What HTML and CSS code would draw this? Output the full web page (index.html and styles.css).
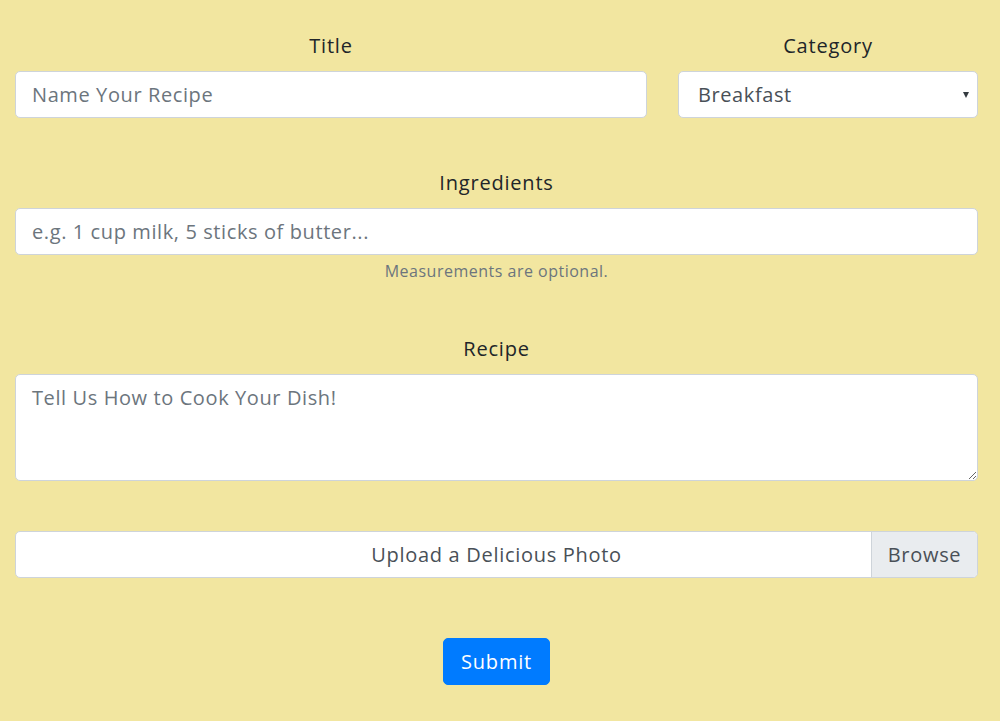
FILE: index.html
```html
<!DOCTYPE html>
<html lang="en">
<head>
<meta charset="utf-8">
<title>New Recipe</title>
<link rel="stylesheet" href="styles.css">
</head>
<body>
<form class="recipe-form">
  <div class="row">
    <div class="group col-main">
      <label class="label" for="title">Title</label>
      <input class="field" id="title" type="text" placeholder="Name Your Recipe">
    </div>
    <div class="group col-side">
      <label class="label" for="category">Category</label>
      <div class="select-wrap">
        <select class="field select" id="category">
          <option>Breakfast</option>
          <option>Lunch</option>
          <option>Dinner</option>
          <option>Dessert</option>
        </select>
        <span class="caret"></span>
      </div>
    </div>
  </div>

  <div class="group">
    <label class="label" for="ingredients">Ingredients</label>
    <input class="field" id="ingredients" type="text" placeholder="e.g. 1 cup milk, 5 sticks of butter...">
    <small class="help">Measurements are optional.</small>
  </div>

  <div class="group">
    <label class="label" for="recipe">Recipe</label>
    <textarea class="field area" id="recipe" placeholder="Tell Us How to Cook Your Dish!"></textarea>
  </div>

  <div class="group">
    <label class="file" for="photo">
      <span class="file-text">Upload a Delicious Photo</span>
      <span class="file-btn">Browse</span>
    </label>
    <input class="file-input" id="photo" type="file">
  </div>

  <div class="actions">
    <button class="submit" type="submit">Submit</button>
  </div>
</form>
</body>
</html>
```

FILE: styles.css
```css
html, body {
  margin: 0;
  padding: 0;
}
body {
  background: #f2e6a0;
  font-family: "Open Sans", "Noto Sans", sans-serif;
  color: #212529;
  width: 1000px;
  height: 721px;
  overflow: hidden;
}
.recipe-form {
  padding: 31px 22px 0 15px;
}
.row {
  display: flex;
  gap: 31px;
}
.col-main {
  flex: 0 0 632px;
}
.col-side {
  flex: 1 1 auto;
}
.group {
  display: flex;
  flex-direction: column;
  margin-bottom: 50px;
}
.group-help {
  margin-bottom: 51px;
}
.label {
  display: block;
  text-align: center;
  font-size: 20px;
  line-height: 30px;
  letter-spacing: 0.8px;
  margin-bottom: 10px;
  color: #212529;
}
.field {
  box-sizing: border-box;
  width: 100%;
  height: 47px;
  margin: 0;
  padding: 7px 16px;
  font-family: inherit;
  font-size: 20px;
  line-height: 30px;
  letter-spacing: 0.6px;
  color: #495057;
  background: #fff;
  border: 1px solid #ced4da;
  border-radius: 5px;
  outline: none;
}
.field::placeholder {
  color: #6c757d;
  opacity: 1;
}
.select-wrap {
  position: relative;
}
.select {
  -webkit-appearance: none;
  appearance: none;
  padding-left: 19px;
}
.caret {
  position: absolute;
  right: 9px;
  top: 21px;
  width: 0;
  height: 0;
  border-left: 3.5px solid transparent;
  border-right: 3.5px solid transparent;
  border-top: 6px solid #343a40;
  pointer-events: none;
}
.help {
  display: block;
  text-align: center;
  margin-top: 4px;
  margin-bottom: 1px;
  font-size: 16px;
  line-height: 24px;
  letter-spacing: 0.5px;
  color: #6c757d;
}
.area {
  height: 107px;
  resize: vertical;
  padding-top: 8px;
}
.file {
  box-sizing: border-box;
  display: flex;
  height: 47px;
  background: #fff;
  border: 1px solid #ced4da;
  border-radius: 5px;
  overflow: hidden;
  font-size: 20px;
  line-height: 30px;
  letter-spacing: 0.7px;
  color: #495057;
  cursor: pointer;
}
.file-text {
  flex: 1 1 auto;
  display: flex;
  align-items: center;
  justify-content: center;
  padding-left: 106px;
}
.file-btn {
  flex: 0 0 auto;
  box-sizing: border-box;
  width: 106px;
  display: flex;
  align-items: center;
  justify-content: center;
  background: #e9ecef;
  border-left: 1px solid #ced4da;
}
.file-input {
  display: none;
}
.actions {
  display: flex;
  justify-content: center;
  padding-top: 10px;
}
.submit {
  box-sizing: border-box;
  width: 107px;
  height: 47px;
  padding: 0;
  font-family: inherit;
  font-size: 20px;
  letter-spacing: 0.8px;
  color: #fff;
  background: #007bff;
  border: 1px solid #007bff;
  border-radius: 5px;
  cursor: pointer;
}
```
